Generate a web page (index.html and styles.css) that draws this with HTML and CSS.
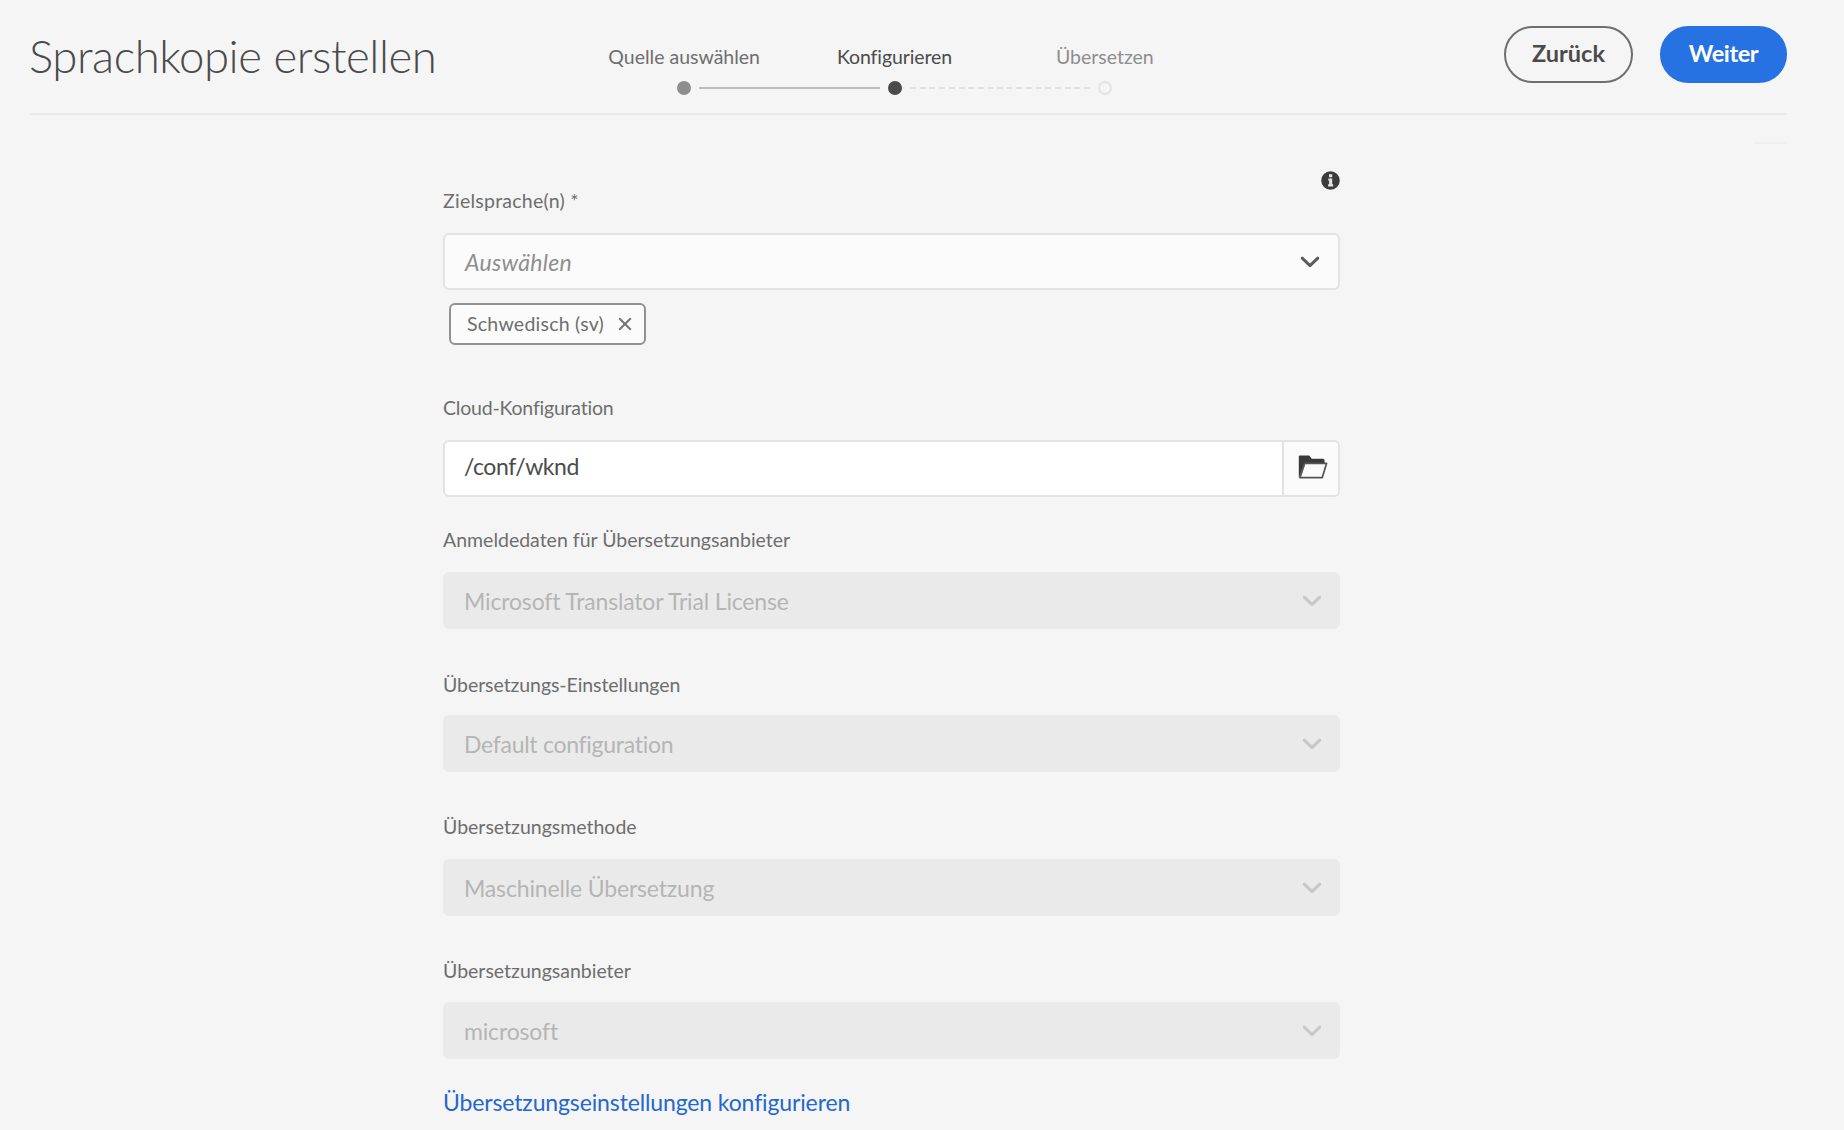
FILE: index.html
```
<!DOCTYPE html>
<html lang="de">
<head>
<meta charset="utf-8">
<title>Sprachkopie erstellen</title>
<link rel="stylesheet" href="styles.css">
</head>
<body>
<header class="header">
  <h1 class="title">Sprachkopie erstellen</h1>
  <ol class="steps">
    <li class="step step-done"><span class="step-label">Quelle auswählen</span><span class="track"><i class="line line-none"></i><i class="dot"></i><i class="line line-solid"></i></span></li>
    <li class="step step-current"><span class="step-label">Konfigurieren</span><span class="track"><i class="line line-solid"></i><i class="dot"></i><i class="line line-dashed line-start"></i></span></li>
    <li class="step step-next"><span class="step-label">Übersetzen</span><span class="track"><i class="line line-dashed line-end"></i><i class="dot"></i><i class="line line-none"></i></span></li>
  </ol>
  <div class="actions">
    <button class="button">Zurück</button>
    <button class="button button-primary">Weiter</button>
  </div>
</header>
<div class="toolbar-edge"></div>
<main class="form">
  <div class="info-row">
    <svg class="info" viewBox="0 0 19 19"><circle cx="9.5" cy="9.5" r="9.3" fill="#3c3c3c"/><path d="M8 3.3h3.2v2.9H8zM7.3 7.6h3.9v5.6h1v2.2H7.1v-2.2h1V9.5h-.8z" fill="#e4e4e4"/></svg>
  </div>
  <section class="field field-target">
    <label class="label">Zielsprache(n) *</label>
    <div class="select"><span class="placeholder">Auswählen</span><svg class="chevron" viewBox="0 0 20 12"><path d="M2.2 2.2 10 9.6l7.8-7.4"/></svg></div>
    <div class="tag"><span>Schwedisch (sv)</span><svg class="close" viewBox="0 0 14 14"><path d="M1.2 1.2l11.6 11.6M12.8 1.2 1.2 12.8"/></svg></div>
  </section>
  <section class="field field-cloud">
    <label class="label">Cloud-Konfiguration</label>
    <div class="picker"><span class="picker-value">/conf/wknd</span><span class="picker-button"><svg class="folder" viewBox="0 0 30 24"><path d="M.8 23V1.6Q.8.6 1.8.6h9.4l2.6 3.2h11q1.8 0 1.8 1.8v2.5H6.8Z" fill="#3a3a3a"/><path d="M6.8 8.3h21.8l-4.3 14.3H1.9Z" fill="#fafafa" stroke="#555" stroke-width="1.7" stroke-linejoin="round"/></svg></span></div>
  </section>
  <section class="field field-credentials">
    <label class="label">Anmeldedaten für Übersetzungsanbieter</label>
    <div class="select disabled"><span>Microsoft Translator Trial License</span><svg class="chevron" viewBox="0 0 20 12"><path d="M2.2 2.2 10 9.6l7.8-7.4"/></svg></div>
  </section>
  <section class="field field-settings">
    <label class="label">Übersetzungs-Einstellungen</label>
    <div class="select disabled"><span>Default configuration</span><svg class="chevron" viewBox="0 0 20 12"><path d="M2.2 2.2 10 9.6l7.8-7.4"/></svg></div>
  </section>
  <section class="field field-method">
    <label class="label">Übersetzungsmethode</label>
    <div class="select disabled"><span>Maschinelle Übersetzung</span><svg class="chevron" viewBox="0 0 20 12"><path d="M2.2 2.2 10 9.6l7.8-7.4"/></svg></div>
  </section>
  <section class="field field-provider">
    <label class="label">Übersetzungsanbieter</label>
    <div class="select disabled"><span>microsoft</span><svg class="chevron" viewBox="0 0 20 12"><path d="M2.2 2.2 10 9.6l7.8-7.4"/></svg></div>
  </section>
  <a class="link">Übersetzungseinstellungen konfigurieren</a>
</main>
</body>
</html>
```
FILE: styles.css
```
* { box-sizing: border-box; }
html { overflow: hidden; }
body {
  margin: 0;
  height: 1130px;
  background: #f5f5f5;
  color: #6e6e6e;
  font: 400 19.5px/24px Lato, sans-serif;
  white-space: nowrap;
}
.header {
  display: flex;
  align-items: flex-start;
  height: 115px;
  margin: 0 57px 0 30px;
  border-bottom: 2px solid #e9e9e9;
}
.title {
  width: 549px;
  margin: 26px 0 0 -1px;
  font-size: 45.5px;
  font-weight: 300;
  letter-spacing: -0.45px;
  line-height: 60px;
  color: #4b4b4b;
}
.steps {
  display: flex;
  width: 631px;
  margin: 45px 0 0 1px;
  padding: 0;
  list-style: none;
}
.step { flex: 1; text-align: center; }
.step-label { display: block; }
.step-current { color: #4b4b4b; }
.step-current .step-label { letter-spacing: -0.1px; }
.step-next { color: #8e8e8e; }
.track { display: flex; align-items: center; height: 14px; margin-top: 12px; }
.dot { width: 14px; height: 14px; margin: 0 8px; border-radius: 50%; background: #8e8e8e; }
.step-current .dot { background: #4b4b4b; }
.step-next .dot { border: 2px solid #e3e3e3; background: transparent; }
.line { flex: 1; height: 2px; }
.line-solid { background: #bcbcbc; }
.line-dashed { background: repeating-linear-gradient(90deg, #e1e1e1 0 6px, transparent 6px 9.7px); }
.line-end { background: repeating-linear-gradient(270deg, #e1e1e1 0 6px, transparent 6px 9.7px); }
.actions { display: flex; gap: 27px; margin: 26px 0 0 auto; }
.button {
  width: 129px;
  height: 57px;
  padding: 0 0 4px;
  border: 2px solid #6e6e6e;
  border-radius: 29px;
  background: transparent;
  color: #4b4b4b;
  font: 700 23.5px/30px Lato, sans-serif;
}
.button-primary { width: 127px; border-color: #2672e3; background: #2672e3; color: #fff; letter-spacing: -0.4px; }
.toolbar-edge { width: 33px; height: 2px; margin: 27px 57px 0 auto; background: #efefef; }
.form { width: 897px; margin-left: 443px; }
.info-row { display: flex; justify-content: flex-end; height: 45px; padding-top: 27px; }
.info { display: block; width: 19px; height: 19px; }
.label { display: block; }
.field { display: flex; flex-direction: column; }
.select, .picker { display: flex; align-items: center; height: 57px; border: 2px solid #e3e3e3; border-radius: 6px; background: #fbfbfb; font-size: 23px; letter-spacing: -0.16px; line-height: 30px; }
.select { justify-content: space-between; padding: 0 17px 0 19px; }
.placeholder { padding-left: 1px; color: #8e8e8e; font-style: italic; letter-spacing: 0.3px; }
.chevron { width: 20px; height: 12px; fill: none; stroke: #5b5b5b; stroke-width: 3; stroke-linecap: round; stroke-linejoin: round; margin-right: 1px; }
.disabled { border-color: #eaeaea; background: #eaeaea; color: #b5b5b5; padding-right: 16px; }
.disabled .chevron { stroke: #c8c8c8; margin-right: 0; }
.field-target .label { margin-bottom: 20px; letter-spacing: 0.25px; }
.tag { display: flex; align-items: center; gap: 14px; align-self: flex-start; width: 197px; height: 42px; margin: 13px 0 0 6px; padding: 0 0 1px 16px; border: 2px solid #929292; border-radius: 6px; background: #fbfbfb; letter-spacing: 0.25px; }
.close { width: 14px; height: 14px; fill: none; stroke: #747474; stroke-width: 2; }
.field-cloud { margin-top: 51px; }
.field-cloud .label { margin-bottom: 20px; letter-spacing: -0.2px; }
.picker { overflow: hidden; background: #fff; }
.picker-value { flex: 1; padding: 0 0 5px 19px; color: #4b4b4b; letter-spacing: -0.4px; }
.picker-button { display: flex; align-items: center; justify-content: center; width: 56px; height: 53px; padding: 0 0 3px 3px; border-left: 2px solid #e3e3e3; background: #fbfbfb; }
.folder { width: 30px; height: 24px; }
.field-credentials { margin-top: 31px; }
.field-credentials .label { margin-bottom: 20px; }
.field-settings { margin-top: 44px; }
.field-settings .label { margin-bottom: 18px; letter-spacing: -0.07px; }
.field-settings .select { letter-spacing: -0.28px; }
.field-method { margin-top: 43px; }
.field-method .label { margin-bottom: 20px; }
.field-provider { margin-top: 43px; }
.field-provider .label { margin-bottom: 19px; }
.link { display: block; margin-top: 28px; color: #2468ce; font-size: 23px; letter-spacing: -0.13px; line-height: 30px; }
```
